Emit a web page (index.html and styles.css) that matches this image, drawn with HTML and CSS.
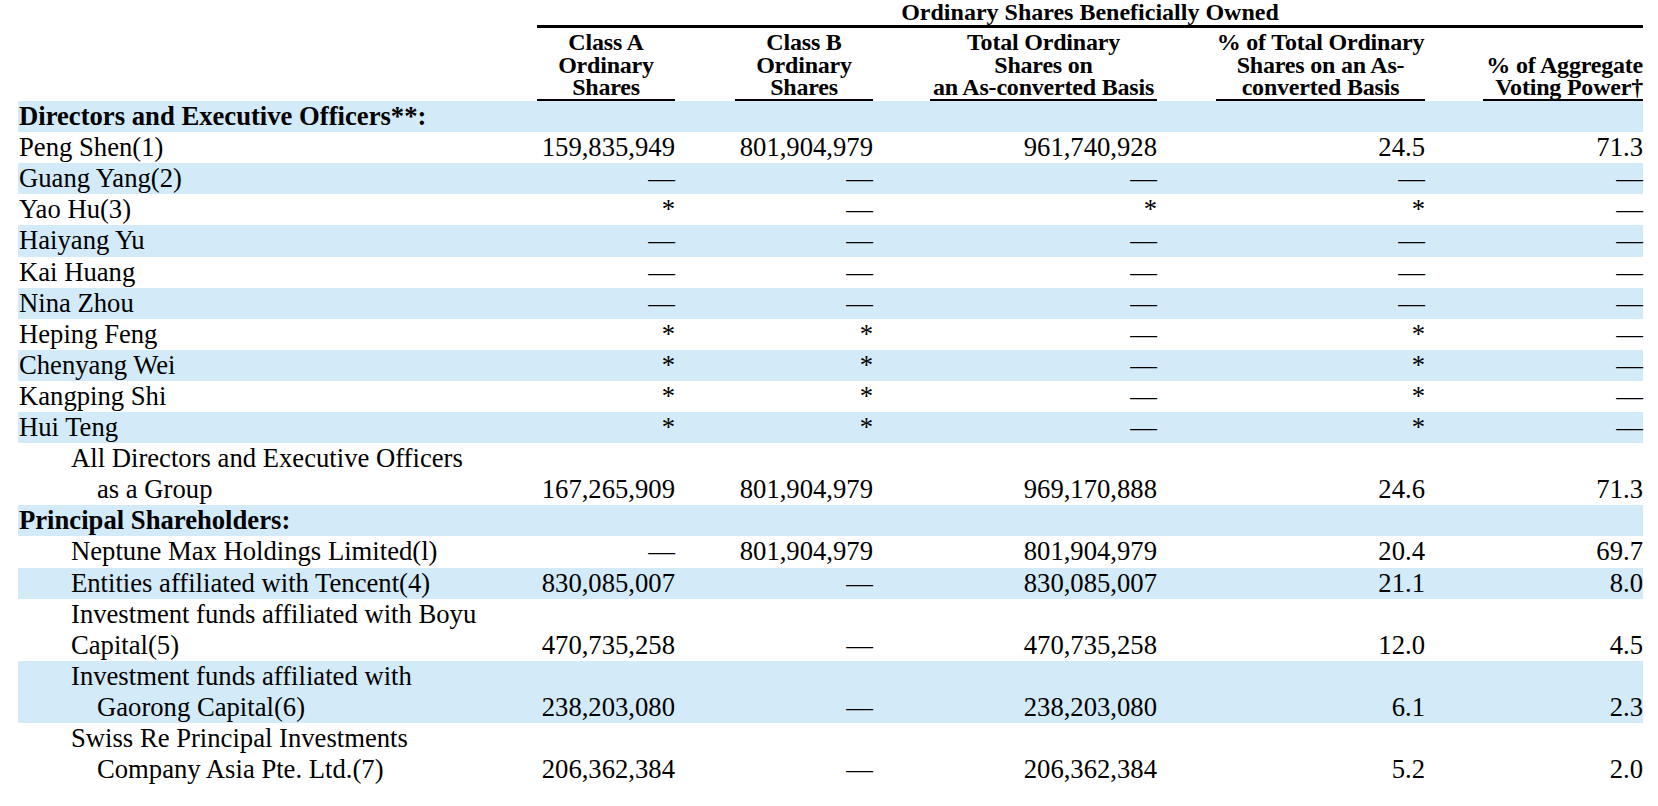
FILE: index.html
```html
<!DOCTYPE html>
<html lang="en">
<head>
<meta charset="utf-8">
<title>Ordinary Shares Beneficially Owned</title>
<link rel="stylesheet" href="styles.css">
</head>
<body>
<table class="own">
  <colgroup>
    <col class="c-label"><col class="c-a"><col class="c-g1"><col class="c-b"><col class="c-g2"><col class="c-t"><col class="c-g3"><col class="c-p"><col class="c-g4"><col class="c-v">
  </colgroup>
  <thead>
    <tr class="title-row">
      <th></th>
      <th colspan="9" class="title">Ordinary Shares Beneficially Owned</th>
    </tr>
    <tr class="head-row">
      <th></th>
      <th class="hc">Class A<br>Ordinary<br>Shares</th>
      <th class="gap"></th>
      <th class="hc">Class B<br>Ordinary<br>Shares</th>
      <th class="gap"></th>
      <th class="hc">Total Ordinary<br>Shares on<br>an As-converted Basis</th>
      <th class="gap"></th>
      <th class="hc">% of Total Ordinary<br>Shares on an As-<br>converted Basis</th>
      <th class="gap"></th>
      <th class="hc hr">% of Aggregate<br>Voting Power†</th>
    </tr>
  </thead>
  <tbody>
    <tr class="blue"><td class="lab sec">Directors and Executive Officers**:</td><td></td><td></td><td></td><td></td><td></td><td></td><td></td><td></td><td></td></tr>
    <tr><td class="lab">Peng Shen(1)</td><td class="n">159,835,949</td><td></td><td class="n">801,904,979</td><td></td><td class="n">961,740,928</td><td></td><td class="n">24.5</td><td></td><td class="n">71.3</td></tr>
    <tr class="blue"><td class="lab">Guang Yang(2)</td><td class="n">—</td><td></td><td class="n">—</td><td></td><td class="n">—</td><td></td><td class="n">—</td><td></td><td class="n">—</td></tr>
    <tr><td class="lab">Yao Hu(3)</td><td class="n">*</td><td></td><td class="n">—</td><td></td><td class="n">*</td><td></td><td class="n">*</td><td></td><td class="n">—</td></tr>
    <tr class="blue"><td class="lab">Haiyang Yu</td><td class="n">—</td><td></td><td class="n">—</td><td></td><td class="n">—</td><td></td><td class="n">—</td><td></td><td class="n">—</td></tr>
    <tr><td class="lab">Kai Huang</td><td class="n">—</td><td></td><td class="n">—</td><td></td><td class="n">—</td><td></td><td class="n">—</td><td></td><td class="n">—</td></tr>
    <tr class="blue"><td class="lab">Nina Zhou</td><td class="n">—</td><td></td><td class="n">—</td><td></td><td class="n">—</td><td></td><td class="n">—</td><td></td><td class="n">—</td></tr>
    <tr><td class="lab">Heping Feng</td><td class="n">*</td><td></td><td class="n">*</td><td></td><td class="n">—</td><td></td><td class="n">*</td><td></td><td class="n">—</td></tr>
    <tr class="blue"><td class="lab">Chenyang Wei</td><td class="n">*</td><td></td><td class="n">*</td><td></td><td class="n">—</td><td></td><td class="n">*</td><td></td><td class="n">—</td></tr>
    <tr><td class="lab">Kangping Shi</td><td class="n">*</td><td></td><td class="n">*</td><td></td><td class="n">—</td><td></td><td class="n">*</td><td></td><td class="n">—</td></tr>
    <tr class="blue"><td class="lab">Hui Teng</td><td class="n">*</td><td></td><td class="n">*</td><td></td><td class="n">—</td><td></td><td class="n">*</td><td></td><td class="n">—</td></tr>
    <tr><td class="lab"><div class="i1">All Directors and Executive Officers</div><div class="i2">as a Group</div></td><td class="n">167,265,909</td><td></td><td class="n">801,904,979</td><td></td><td class="n">969,170,888</td><td></td><td class="n">24.6</td><td></td><td class="n">71.3</td></tr>
    <tr class="blue"><td class="lab sec">Principal Shareholders:</td><td></td><td></td><td></td><td></td><td></td><td></td><td></td><td></td><td></td></tr>
    <tr><td class="lab"><div class="i1">Neptune Max Holdings Limited(l)</div></td><td class="n">—</td><td></td><td class="n">801,904,979</td><td></td><td class="n">801,904,979</td><td></td><td class="n">20.4</td><td></td><td class="n">69.7</td></tr>
    <tr class="blue"><td class="lab"><div class="i1">Entities affiliated with Tencent(4)</div></td><td class="n">830,085,007</td><td></td><td class="n">—</td><td></td><td class="n">830,085,007</td><td></td><td class="n">21.1</td><td></td><td class="n">8.0</td></tr>
    <tr><td class="lab"><div class="i1">Investment funds affiliated with Boyu</div><div class="i1">Capital(5)</div></td><td class="n">470,735,258</td><td></td><td class="n">—</td><td></td><td class="n">470,735,258</td><td></td><td class="n">12.0</td><td></td><td class="n">4.5</td></tr>
    <tr class="blue"><td class="lab"><div class="i1">Investment funds affiliated with</div><div class="i2">Gaorong Capital(6)</div></td><td class="n">238,203,080</td><td></td><td class="n">—</td><td></td><td class="n">238,203,080</td><td></td><td class="n">6.1</td><td></td><td class="n">2.3</td></tr>
    <tr><td class="lab"><div class="i1">Swiss Re Principal Investments</div><div class="i2">Company Asia Pte. Ltd.(7)</div></td><td class="n">206,362,384</td><td></td><td class="n">—</td><td></td><td class="n">206,362,384</td><td></td><td class="n">5.2</td><td></td><td class="n">2.0</td></tr>
  </tbody>
</table>
</body>
</html>
```

FILE: styles.css
```css
html, body {
  margin: 0;
  padding: 0;
  background: #ffffff;
}

body {
  font-family: "Liberation Serif", "Times New Roman", serif;
  color: #000000;
}

.own {
  margin-left: 18px;
  width: 1625px;
  table-layout: fixed;
  border-collapse: separate;
  border-spacing: 0;
}

.c-label { width: 519px; }
.c-a { width: 138px; }
.c-g1 { width: 60px; }
.c-b { width: 138px; }
.c-g2 { width: 57px; }
.c-t { width: 227px; }
.c-g3 { width: 59px; }
.c-p { width: 209px; }
.c-g4 { width: 58px; }
.c-v { width: 160px; }

.own th,
.own td {
  padding: 0;
}

.title-row th {
  font-size: 24px;
  line-height: 25px;
  font-weight: bold;
  height: 25px;
  vertical-align: bottom;
  white-space: nowrap;
}

.title {
  text-align: center;
  border-bottom: 3px solid #000000;
}

.head-row th {
  font-size: 24px;
  line-height: 22.7px;
  font-weight: bold;
  vertical-align: bottom;
  padding-top: 3px;
  white-space: nowrap;
  overflow: visible;
}

.hc {
  text-align: center;
  border-bottom: 2px solid #000000;
  letter-spacing: -0.2px;
}

.hc.hr {
  text-align: right;
}

.own tbody td {
  font-size: 26.67px;
  line-height: 31.1px;
  vertical-align: bottom;
  white-space: nowrap;
}

.own tbody tr.blue td {
  background: #d3eaf9;
}

.own tbody td.lab {
  vertical-align: top;
  padding-left: 1px;
}

.lab.sec {
  font-weight: bold;
}

.i1 {
  padding-left: 52px;
}

.i2 {
  padding-left: 78px;
}

.n {
  text-align: right;
}
```
